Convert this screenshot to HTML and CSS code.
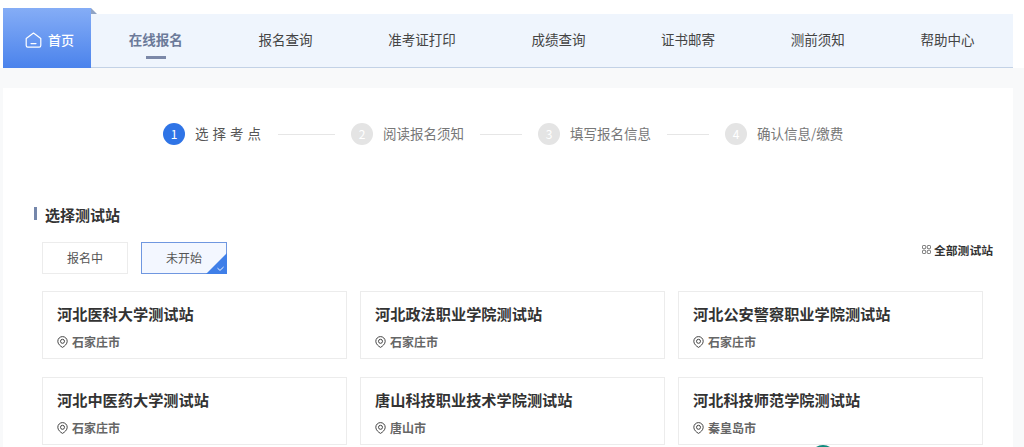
FILE: index.html
```html
<!DOCTYPE html>
<html lang="zh">
<head>
<meta charset="utf-8">
<title>在线报名</title>
<link rel="stylesheet" href="styles.css">
</head>
<body>
<header class="header">
  <a class="home">
    <svg class="home-icon" width="17" height="16" viewBox="0 0 17 16" fill="none" stroke="#fff" stroke-width="1.2"><path d="M1.2 6.6 8.5 1l7.3 5.6v7a1.6 1.6 0 0 1-1.6 1.6H2.8a1.6 1.6 0 0 1-1.6-1.6z" stroke-linejoin="round"/><path d="M6 11.6h5" stroke-linecap="round"/></svg>
    <span>首页</span>
  </a>
  <nav class="nav">
    <a class="nav-item active">在线报名</a>
    <a class="nav-item">报名查询</a>
    <a class="nav-item">准考证打印</a>
    <a class="nav-item">成绩查询</a>
    <a class="nav-item">证书邮寄</a>
    <a class="nav-item">测前须知</a>
    <a class="nav-item">帮助中心</a>
  </nav>
</header>
<main class="panel">
  <ol class="steps">
    <li class="step current"><i class="dot">1</i><span class="step-label">选择考点</span></li>
    <li class="line long"></li>
    <li class="step"><i class="dot">2</i><span class="step-label">阅读报名须知</span></li>
    <li class="line"></li>
    <li class="step"><i class="dot">3</i><span class="step-label">填写报名信息</span></li>
    <li class="line"></li>
    <li class="step"><i class="dot">4</i><span class="step-label">确认信息/缴费</span></li>
  </ol>
  <h2 class="section-title">选择测试站</h2>
  <div class="filter-row">
    <div class="tabs">
      <button class="tab">报名中</button>
      <button class="tab selected">未开始
        <svg class="tick" width="21" height="21" viewBox="0 0 21 21"><path d="M21 0v21H0z" fill="#3f7fe8"/><path d="M11.5 15.2l2.5 2.2 3.6-3.4" fill="none" stroke="#fff" stroke-width=".9"/></svg>
      </button>
    </div>
    <a class="all">
      <svg width="9" height="9" viewBox="0 0 9 9" fill="none" stroke="#555" stroke-width=".8"><rect x=".5" y=".5" width="3.2" height="3.2" rx=".8"/><rect x="5.3" y=".5" width="3.2" height="3.2" rx=".8"/><rect x=".5" y="5.3" width="3.2" height="3.2" rx=".8"/><rect x="5.3" y="5.3" width="3.2" height="3.2" rx=".8"/></svg>
      <span>全部测试站</span>
    </a>
  </div>
  <div class="cards">
    <article class="card"><h3>河北医科大学测试站</h3><p><svg class="pin" viewBox="0 0 11 12"><path d="M5.5.6a4.7 4.7 0 0 1 4.7 4.7c0 2.7-2.6 4.9-4.7 6.1C3.4 10.2.8 8 .8 5.3A4.7 4.7 0 0 1 5.5.6z"/><circle cx="5.5" cy="5.3" r="2"/></svg>石家庄市</p></article>
    <article class="card"><h3>河北政法职业学院测试站</h3><p><svg class="pin" viewBox="0 0 11 12"><path d="M5.5.6a4.7 4.7 0 0 1 4.7 4.7c0 2.7-2.6 4.9-4.7 6.1C3.4 10.2.8 8 .8 5.3A4.7 4.7 0 0 1 5.5.6z"/><circle cx="5.5" cy="5.3" r="2"/></svg>石家庄市</p></article>
    <article class="card"><h3>河北公安警察职业学院测试站</h3><p><svg class="pin" viewBox="0 0 11 12"><path d="M5.5.6a4.7 4.7 0 0 1 4.7 4.7c0 2.7-2.6 4.9-4.7 6.1C3.4 10.2.8 8 .8 5.3A4.7 4.7 0 0 1 5.5.6z"/><circle cx="5.5" cy="5.3" r="2"/></svg>石家庄市</p></article>
    <article class="card"><h3>河北中医药大学测试站</h3><p><svg class="pin" viewBox="0 0 11 12"><path d="M5.5.6a4.7 4.7 0 0 1 4.7 4.7c0 2.7-2.6 4.9-4.7 6.1C3.4 10.2.8 8 .8 5.3A4.7 4.7 0 0 1 5.5.6z"/><circle cx="5.5" cy="5.3" r="2"/></svg>石家庄市</p></article>
    <article class="card"><h3>唐山科技职业技术学院测试站</h3><p><svg class="pin" viewBox="0 0 11 12"><path d="M5.5.6a4.7 4.7 0 0 1 4.7 4.7c0 2.7-2.6 4.9-4.7 6.1C3.4 10.2.8 8 .8 5.3A4.7 4.7 0 0 1 5.5.6z"/><circle cx="5.5" cy="5.3" r="2"/></svg>唐山市</p></article>
    <article class="card"><h3>河北科技师范学院测试站</h3><p><svg class="pin" viewBox="0 0 11 12"><path d="M5.5.6a4.7 4.7 0 0 1 4.7 4.7c0 2.7-2.6 4.9-4.7 6.1C3.4 10.2.8 8 .8 5.3A4.7 4.7 0 0 1 5.5.6z"/><circle cx="5.5" cy="5.3" r="2"/></svg>秦皇岛市</p></article>
  </div>
</main>
<div class="float-badge"></div>
</body>
</html>
```
FILE: styles.css
```css
* { box-sizing: border-box; }
html, body { height: 447px; overflow: hidden; }
body {
  margin: 0;
  background: #f8f9fa;
  font-family: "Noto Sans CJK SC", "Noto Sans", sans-serif;
  color: #333;
  position: relative;
}
.header {
  display: flex;
  align-items: flex-end;
  height: 88px;
  padding: 8px 11px 20px 3px;
  background: linear-gradient(#fff 0, #fff 68px, #f8f9fa 68px);
}
.home {
  position: relative;
  flex: none;
  width: 88px;
  height: 60px;
  display: flex;
  align-items: center;
  justify-content: center;
  gap: 6px;
  padding: 3px 0 0 5px;
  color: #fff;
  font-size: 13px;
  font-weight: 500;
  background: linear-gradient(#85adf6, #4b83ec);
}
.home::after {
  content: "";
  position: absolute;
  left: 100%;
  top: 0;
  border-style: solid;
  border-width: 6px 0 0 6px;
  border-color: transparent transparent transparent #8fa3c4;
}
.nav {
  flex: 1;
  min-width: 0;
  height: 54px;
  display: flex;
  background: #eff5fd;
  border-bottom: 1px solid #c3d2e6;
}
.nav-item {
  position: relative;
  padding: 0 37.85px;
  line-height: 50px;
  font-size: 13.5px;
  color: #444;
  white-space: nowrap;
}
.nav-item.active { color: #6b7a99; font-weight: 700; }
.nav-item.active::after {
  content: "";
  position: absolute;
  left: 50%;
  bottom: 8px;
  width: 20px;
  height: 3px;
  margin-left: -10px;
  background: #7b88a8;
}
.panel {
  margin: 0 11px 0 3px;
  height: 359px;
  background: #fff;
  overflow: hidden;
}
.steps {
  list-style: none;
  margin: 35px 0 0;
  padding: 0 0 0 160px;
  height: 22px;
  display: flex;
  align-items: center;
  gap: 16px;
}
.step { display: flex; align-items: center; gap: 10px; font-size: 13.5px; color: #777; }
.step-label { margin-top: -2px; }
.dot {
  width: 22px;
  height: 22px;
  border-radius: 50%;
  background: #e4e4e4;
  color: #fff;
  font-style: normal;
  font-size: 12px;
  line-height: 22px;
  text-align: center;
}
.step.current .dot { background: #2f74e6; }
.step.current .step-label { letter-spacing: 4px; color: #555; margin-right: -3px; }
.line { width: 42px; height: 1px; background: #e6e6e6; }
.line.long { width: 57px; }
.section-title {
  margin: 59px 0 0 31px;
  padding-left: 11px;
  position: relative;
  font-size: 15px;
  line-height: 22px;
  font-weight: 700;
  color: #333;
}
.section-title::before {
  content: "";
  position: absolute;
  left: 0;
  top: 3px;
  width: 3px;
  height: 13px;
  background: #7587ab;
}
.filter-row {
  display: flex;
  justify-content: space-between;
  margin: 16px 20px 0 39px;
  height: 32px;
}
.tabs { display: flex; gap: 13px; }
.tab {
  position: relative;
  width: 86px;
  height: 32px;
  padding: 0 0 2px;
  background: #fff;
  border: 1px solid #ececec;
  font: inherit;
  font-size: 12px;
  color: #555;
}
.tab.selected { background: #f3f7ff; border-color: #6f97e0; }
.tick { position: absolute; right: -1px; bottom: -1px; display: block; }
.all {
  display: flex;
  align-items: center;
  gap: 3px;
  height: 14px;
  font-size: 11.8px;
  font-weight: 700;
  color: #333;
}
.cards {
  display: grid;
  grid-template-columns: repeat(3, 305px);
  grid-auto-rows: 68px;
  gap: 18px 13px;
  margin: 17px 0 0 39px;
}
.card {
  border: 1px solid #ececec;
  padding: 10px 14px 0;
  background: #fff;
}
.card h3 {
  margin: 0;
  font-size: 15.2px;
  line-height: 22px;
  font-weight: 700;
  color: #333;
  white-space: nowrap;
}
.card p {
  margin: 9px 0 0;
  display: flex;
  align-items: center;
  gap: 4px;
  font-size: 12px;
  line-height: 18px;
  font-weight: 700;
  color: #666;
}
.pin { width: 11px; height: 12px; fill: none; stroke: #444; stroke-width: 1; }
.float-badge {
  position: absolute;
  left: 810px;
  top: 445px;
  width: 26px;
  height: 26px;
  border-radius: 50%;
  background: #0e8a7d;
}
```
